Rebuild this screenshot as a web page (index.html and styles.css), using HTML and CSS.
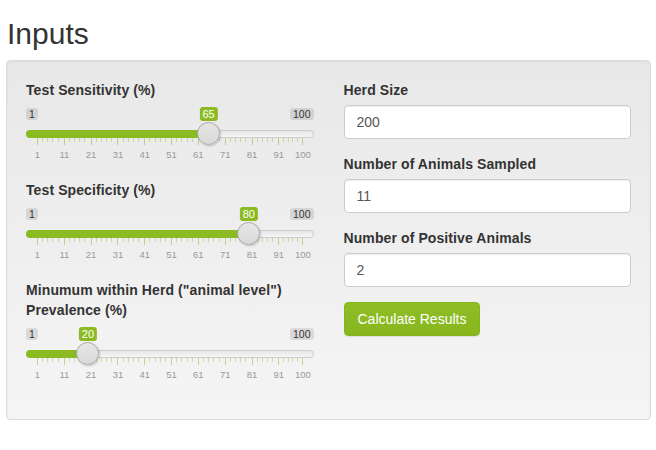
FILE: index.html
```
<!DOCTYPE html>
<html>
<head>
<meta charset="utf-8">
<title>Inputs</title>
<link rel="stylesheet" href="styles.css">
</head>
<body>
<div class="page">
  <h2 class="title">Inputs</h2>
  <div class="well">
    <div class="cols">
      <div class="col">
        <div class="group">
          <label class="lbl">Test Sensitivity (%)</label>
          <div class="irs" style="--p:0.646465">
            <div class="grid">
              <span class="iv"><b>1</b></span><span class="iv"><b>11</b></span><span class="iv"><b>21</b></span><span class="iv"><b>31</b></span><span class="iv"><b>41</b></span><span class="iv"><b>51</b></span><span class="iv"><b>61</b></span><span class="iv"><b>71</b></span><span class="iv"><b>81</b></span><span class="iv l"><b>91</b></span><span class="iv e"><b>100</b></span>
            </div>
            <span class="irs-line"></span>
            <span class="irs-bar"></span>
            <span class="irs-min">1</span>
            <span class="irs-max">100</span>
            <span class="irs-single">65</span>
            <span class="irs-slider"></span>
          </div>
        </div>
        <div class="group">
          <label class="lbl">Test Specificity (%)</label>
          <div class="irs" style="--p:0.797980">
            <div class="grid">
              <span class="iv"><b>1</b></span><span class="iv"><b>11</b></span><span class="iv"><b>21</b></span><span class="iv"><b>31</b></span><span class="iv"><b>41</b></span><span class="iv"><b>51</b></span><span class="iv"><b>61</b></span><span class="iv"><b>71</b></span><span class="iv"><b>81</b></span><span class="iv l"><b>91</b></span><span class="iv e"><b>100</b></span>
            </div>
            <span class="irs-line"></span>
            <span class="irs-bar"></span>
            <span class="irs-min">1</span>
            <span class="irs-max">100</span>
            <span class="irs-single">80</span>
            <span class="irs-slider"></span>
          </div>
        </div>
        <div class="group">
          <label class="lbl">Minumum within Herd ("animal level") Prevalence (%)</label>
          <div class="irs" style="--p:0.191919">
            <div class="grid">
              <span class="iv"><b>1</b></span><span class="iv"><b>11</b></span><span class="iv"><b>21</b></span><span class="iv"><b>31</b></span><span class="iv"><b>41</b></span><span class="iv"><b>51</b></span><span class="iv"><b>61</b></span><span class="iv"><b>71</b></span><span class="iv"><b>81</b></span><span class="iv l"><b>91</b></span><span class="iv e"><b>100</b></span>
            </div>
            <span class="irs-line"></span>
            <span class="irs-bar"></span>
            <span class="irs-min">1</span>
            <span class="irs-max">100</span>
            <span class="irs-single">20</span>
            <span class="irs-slider"></span>
          </div>
        </div>
      </div>
      <div class="col">
        <div class="group">
          <label class="lbl">Herd Size</label>
          <input class="field" type="text" value="200">
        </div>
        <div class="group">
          <label class="lbl">Number of Animals Sampled</label>
          <input class="field" type="text" value="11">
        </div>
        <div class="group">
          <label class="lbl">Number of Positive Animals</label>
          <input class="field" type="text" value="2">
        </div>
        <button class="btn" type="button">Calculate Results</button>
      </div>
    </div>
  </div>
</div>
</body>
</html>
```
FILE: styles.css
```
* { box-sizing: border-box; }
html, body { margin: 0; padding: 0; background: #fff; }
body {
  font-family: "Liberation Sans", Arial, Helvetica, sans-serif;
  font-size: 14px;
  line-height: 20px;
  color: #333;
}
.page { padding: 0 5px 0 6px; }
.title {
  margin: 17px 0 10px 1px;
  font-size: 30px;
  line-height: 33px;
  font-weight: normal;
  color: #333;
}
.well {
  height: 360px;
  padding: 19px;
  border: 1px solid #dcdcdc;
  border-radius: 4px;
  background: linear-gradient(to bottom, #e8e8e8 0%, #f5f5f5 100%);
  box-shadow: inset 0 1px 3px rgba(0,0,0,.05), 0 1px 0 rgba(255,255,255,.1);
}
.cols {
  display: grid;
  grid-template-columns: 1fr 1fr;
  column-gap: 30px;
}
.group { margin-bottom: 15px; }
.lbl {
  display: block;
  margin-bottom: 5px;
  font-weight: bold;
  font-size: 14px;
  line-height: 20px;
  color: #333;
  letter-spacing: 0.1px;
}
.field {
  display: block;
  width: 100%;
  height: 34px;
  padding: 6px 12px;
  font-family: inherit;
  font-size: 14px;
  line-height: 20px;
  color: #555;
  background: #fff;
  border: 1px solid #ccc;
  border-radius: 4px;
  box-shadow: inset 0 1px 1px rgba(0,0,0,.075);
  outline: none;
}
.btn {
  display: inline-block;
  height: 34px;
  padding: 6px 13px;
  font-family: inherit;
  font-size: 14px;
  line-height: 20px;
  color: #fff;
  border: 1px solid #86b31e;
  border-radius: 4px;
  background: linear-gradient(to bottom, #8fbd24 0%, #88b61f 100%);
  box-shadow: 0 1px 1px rgba(0,0,0,.08);
}

/* range slider */
.irs {
  position: relative;
  height: 60px;
}
.irs-line {
  position: absolute;
  left: 0; right: 0; top: 25px;
  height: 8px;
  border: 1px solid #ccc;
  border-radius: 16px;
  background: linear-gradient(to bottom, #ddd -50%, #fff 150%);
}
.irs-bar {
  position: absolute;
  left: 0; top: 25px;
  height: 8px;
  width: calc(11px + var(--p) * (100% - 22px));
  background: #8cba22;
  border-radius: 16px 0 0 16px;
}
.irs-min, .irs-max {
  position: absolute;
  top: 3px;
  height: 12px;
  padding: 0 3px;
  font-size: 10.5px;
  line-height: 12px;
  color: #333;
  background: rgba(0,0,0,.1);
  border-radius: 3px;
}
.irs-min { left: 0; }
.irs-max { right: 0; }
.irs-single {
  position: absolute;
  top: 2px;
  left: calc(11px + var(--p) * (100% - 22px));
  transform: translateX(-50%);
  height: 14px;
  padding: 0 3px;
  font-size: 11px;
  line-height: 14px;
  color: #fff;
  background: #8cba22;
  border-radius: 3px;
}
.irs-slider {
  position: absolute;
  top: 17px;
  left: calc(var(--p) * (100% - 22px) - 0.5px);
  width: 23px;
  height: 23px;
  border: 1px solid #aaa;
  border-radius: 50%;
  background: linear-gradient(to bottom, #e6e6e6 0%, #d9d9d9 100%);
  box-shadow: 1px 1px 2px rgba(0,0,0,.18);
}
.grid {
  position: absolute;
  left: 11px; right: 11px; top: 33px;
  height: 27px;
  display: flex;
}
.iv {
  position: relative;
  flex: 10 1 0;
  height: 100%;
  background-image:
    linear-gradient(rgba(140,186,34,.38), rgba(140,186,34,.38)),
    linear-gradient(rgba(140,186,34,.38), rgba(140,186,34,.38)),
    linear-gradient(rgba(140,186,34,.38), rgba(140,186,34,.38)),
    linear-gradient(rgba(140,186,34,.38), rgba(140,186,34,.38));
  background-size: 1px 4px;
  background-repeat: no-repeat;
  background-position: 20% 0, 40% 0, 60% 0, 80% 0;
}
.iv.l { flex: 9 1 0; }
.iv.e { flex: 0 0 0; background: none; }
.iv::before {
  content: "";
  position: absolute;
  left: 0; top: 0;
  width: 1px;
  height: 7px;
  background: rgba(140,186,34,.5);
}
.iv b {
  position: absolute;
  left: 0.5px; top: 12px;
  transform: translateX(-50%);
  font-weight: normal;
  font-size: 9.5px;
  line-height: 9px;
  color: #999;
  white-space: nowrap;
}
```
